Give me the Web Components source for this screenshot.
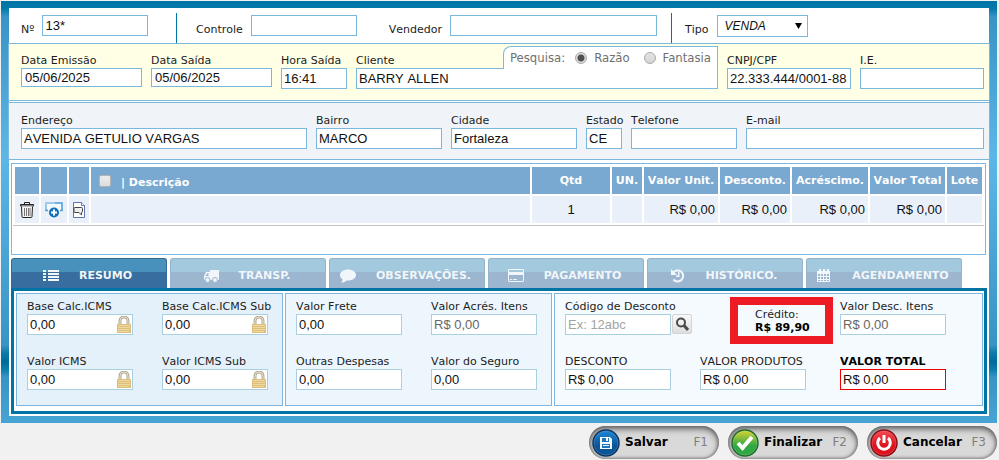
<!DOCTYPE html>
<html lang="pt-BR">
<head>
<meta charset="utf-8">
<title>Venda</title>
<style>
    body {
        margin: 0;
        padding: 1px 2px 0 1px;
        background: #f1f1f1;
        font: 11px/15px "DejaVu Sans", Verdana, sans-serif;
        font-kerning: none;
        color: #1c1c1c;
    }
</style>
</head>
<body>
<sale-frame>
    <header-band>
        <form-field slot="number" label="Nº" value="13*" inline></form-field>
        <form-field slot="people" label="Controle" inline style="--width: 106px"></form-field>
        <form-field slot="people" class="grow" label="Vendedor" inline></form-field>
        <select-field slot="type" label="Tipo" options="VENDA,ORÇAMENTO,DEVOLUÇÃO"></select-field>
    </header-band>
    <form-band class="client">
        <form-field label="Data Emissão" value="05/06/2025" short style="flex: 0 0 121px"></form-field>
        <form-field label="Data Saída" value="05/06/2025" short style="flex: 0 0 121px"></form-field>
        <form-field label="Hora Saída" value="16:41" style="flex: 0 0 66px"></form-field>
        <client-field style="flex: 1"></client-field>
        <form-field label="CNPJ/CPF" value="22.333.444/0001-88" style="flex: 0 0 124px"></form-field>
        <form-field label="I.E." style="flex: 0 0 124px"></form-field>
    </form-band>
    <form-band class="address">
        <form-field label="Endereço" value="AVENIDA GETULIO VARGAS" style="flex: 0 0 286px"></form-field>
        <form-field label="Bairro" value="MARCO" style="flex: 0 0 126px"></form-field>
        <form-field label="Cidade" value="Fortaleza" style="flex: 0 0 126px"></form-field>
        <form-field label="Estado" value="CE" style="flex: 0 0 36px"></form-field>
        <form-field label="Telefone" style="flex: 0 0 106px"></form-field>
        <form-field label="E-mail" style="flex: 1"></form-field>
    </form-band>
    <items-table></items-table>
    <tab-bar></tab-bar>
    <totals-panel>
        <totals-group style="--bg: #e4f1fa; --cols: 106px 106px">
            <form-field label="Base Calc.ICMS" value="0,00" soft locked></form-field>
            <form-field label="Base Calc.ICMS Sub" value="0,00" soft locked></form-field>
            <form-field label="Valor ICMS" value="0,00" soft locked></form-field>
            <form-field label="Valor ICMS Sub" value="0,00" soft locked></form-field>
        </totals-group>
        <totals-group style="--bg: #edf6fd; --cols: 106px 106px">
            <form-field label="Valor Frete" value="0,00" soft></form-field>
            <form-field label="Valor Acrés. Itens" value="R$ 0,00" soft muted></form-field>
            <form-field label="Outras Despesas" value="0,00" soft></form-field>
            <form-field label="Valor do Seguro" value="0,00" soft></form-field>
        </totals-group>
        <totals-group class="wide" style="--bg: #f4fafe; --cols: 106px 111px 106px">
            <form-field label="Código de Desconto" placeholder="Ex: 12abc" soft search></form-field>
            <credit-box value="R$ 89,90">Crédito:</credit-box>
            <form-field label="Valor Desc. Itens" value="R$ 0,00" soft muted></form-field>
            <form-field label="DESCONTO" value="R$ 0,00" soft></form-field>
            <form-field label="VALOR PRODUTOS" value="R$ 0,00" soft style="width: 106px"></form-field>
            <form-field label="VALOR TOTAL" value="R$ 0,00" total></form-field>
        </totals-group>
    </totals-panel>
</sale-frame>
<action-bar>
    <action-button shortcut="F1" icon="save">Salvar</action-button>
    <action-button shortcut="F2" icon="check">Finalizar</action-button>
    <action-button shortcut="F3" icon="power">Cancelar</action-button>
</action-bar>

<script>
const INPUT_CSS = `
    input, select {
        box-sizing: border-box;
        width: 100%;
        min-width: 0;
        height: 21px;
        margin: 0;
        padding: 0 2px;
        border: 1px solid #7ab8de;
        border-radius: 0;
        outline: 0;
        background: #fff;
        color: #111;
        font: 13px "Liberation Sans", Arial, sans-serif;
        font-kerning: none;
    }
    label { display: block; white-space: nowrap; }
`;

const LOCK = `<svg class="lock" width="14" height="17" viewBox="0 0 14 17">
    <path d="M3 8V5a4 4 0 0 1 8 0v3" fill="none" stroke="#b5aa91" stroke-width="3"/>
    <path d="M3 8V5a4 4 0 0 1 8 0v3" fill="none" stroke="#e6e0d0" stroke-width="1"/>
    <path d="M0 8h14v9H0z" fill="#dcbf7c"/>
    <path d="M1 9h12v1H1zM1 11h12v1H1zM1 13h12v1H1zM1 15h11v1H1z" fill="#f0d99c"/>
</svg>`;

class SaleFrame extends HTMLElement {
    constructor() {
        super();
        this.attachShadow({ mode: 'open' });
        this.shadowRoot.innerHTML = `
            <style>
                :host {
                    display: block;
                    padding: 7px 8px;
                    background: linear-gradient(#0075a5 0, #0078a9 7px, #3994c6 16px, #5cb6e6 155px,
                        #3993c4 344px, #0b7aaa 352px, #006b9b 361px, #0b7fae 369px, #3993c5 376px, #47a5d5 422px);
                }
                main { background: #fff; padding-bottom: 2px; }
            </style>
            <main><slot></slot></main>
        `;
    }
}

class HeaderBand extends HTMLElement {
    constructor() {
        super();
        this.attachShadow({ mode: 'open' });
        this.shadowRoot.innerHTML = `
            <style>
                :host { display: flex; padding-top: 5px; }
                div { box-sizing: border-box; display: flex; align-items: flex-start; height: 30px; padding: 2px 14px 0 13px; }
                .number { width: 168px; padding: 2px 28px 0 12px; border-right: 1px solid #0075a5; }
                .people { flex: 1; gap: 32px; padding-left: 19px; border-right: 1px solid #0075a5; }
                .type { width: 317px; }
                .number ::slotted(*), ::slotted(.grow) { flex: 1; }
            </style>
            <div class="number"><slot name="number"></slot></div>
            <div class="people"><slot name="people"></slot></div>
            <div class="type"><slot name="type"></slot></div>
        `;
    }
}

class FormBand extends HTMLElement {
    constructor() {
        super();
        this.attachShadow({ mode: 'open' });
        this.shadowRoot.innerHTML = `
            <style>
                :host {
                    display: flex;
                    gap: 9px;
                    margin: 0 -1px;
                    padding: 9px 5px 11px 12px;
                    border: 1px solid #7ab8de;
                    background: #ffffe6;
                }
                :host(.address) { margin-top: 1px; padding: 10px 5px 10px 12px; background: #f0f4f9; }
            </style>
            <slot></slot>
        `;
    }
}

class FormField extends HTMLElement {
    constructor() {
        super();
        this.attachShadow({ mode: 'open' });
        const value = this.getAttribute('value') || '';
        const placeholder = this.getAttribute('placeholder') || '';
        this.shadowRoot.innerHTML = `
            <style>
                ${INPUT_CSS}
                :host { display: block; min-width: 0; }
                .box { position: relative; display: flex; }
                :host([inline]) { display: flex; gap: 8px; }
                :host([inline]) label { padding-top: 7px; }
                :host([inline]) .box { flex: 1; min-width: var(--width, 0); }
                :host([inline]) input { flex: 1; width: 0; }
                :host([short]) input { height: 19px; padding: 0 3px; }
                :host([soft]) input { border-color: #a9d0e1; }
                :host([muted]) input { color: #666; }
                :host([total]) input { border-color: #f00000; }
                :host([total]) label { font-weight: bold; color: #000; }
                input::placeholder { color: #a3a3a3; }
                .lock { position: absolute; right: 2px; top: 2px; }
                button {
                    flex: none;
                    box-sizing: border-box;
                    width: 20px;
                    height: 20px;
                    margin: 0 -22px 0 1px;
                    padding: 2px;
                    border: 1px solid #d4d4d4;
                    border-radius: 2px;
                    background: linear-gradient(#fafafa, #dedede);
                }
                button svg { display: block; }
            </style>
            <label for="field">${this.getAttribute('label')}</label>
            <div class="box">
                <input id="field" type="text" value="${value}" placeholder="${placeholder}">
                ${this.hasAttribute('locked') ? LOCK : ''}
                ${this.hasAttribute('search') ? `
                <button type="button" aria-label="Buscar">
                    <svg width="14" height="14" viewBox="0 0 14 14" fill="none" stroke="#4a4a4a">
                        <circle cx="6" cy="5.5" r="4" stroke-width="2"/>
                        <path d="M9 8.5l4 4.5" stroke-width="3"/>
                    </svg>
                </button>` : ''}
            </div>
        `;
    }
}

class SelectField extends HTMLElement {
    constructor() {
        super();
        this.attachShadow({ mode: 'open' });
        const options = this.getAttribute('options').split(',');
        this.shadowRoot.innerHTML = `
            <style>
                ${INPUT_CSS}
                :host { display: flex; gap: 8px; }
                label { padding-top: 7px; }
                .box { position: relative; width: 91px; }
                select { appearance: none; height: 22px; padding-left: 7px; font-size: 12px; font-style: italic; }
                svg { position: absolute; right: 6px; top: 8px; pointer-events: none; }
            </style>
            <label for="field">${this.getAttribute('label')}</label>
            <div class="box">
                <select id="field">${options.map(o => `<option>${o}</option>`).join('')}</select>
                <svg width="7" height="6" viewBox="0 0 7 6"><path d="M0 0h7L3.500 6z"/></svg>
            </div>
        `;
    }
}

class ClientField extends HTMLElement {
    constructor() {
        super();
        this.attachShadow({ mode: 'open' });
        this.shadowRoot.innerHTML = `
            <style>
                ${INPUT_CSS}
                :host { display: block; position: relative; min-width: 0; }
                fieldset {
                    position: absolute;
                    right: 0;
                    bottom: 20px;
                    box-sizing: border-box;
                    display: flex;
                    align-items: center;
                    height: 23px;
                    margin: 0;
                    padding: 0 6px;
                    border: 1px solid #7ab8de;
                    border-bottom: 0;
                    border-top-left-radius: 8px;
                    background: #fff;
                    color: #707070;
                    font: 13px/20px "DejaVu Sans Condensed", Tahoma, sans-serif;
                }
                fieldset input {
                    appearance: none;
                    width: 12px;
                    height: 12px;
                    margin: 0 7px 0 10px;
                    padding: 0;
                    border: 1px solid #aaa;
                    border-radius: 50%;
                    background: linear-gradient(#e4e4e4, #d4d4d4);
                }
                fieldset input:checked { background: radial-gradient(circle, #505050 3px, #dcdcdc 4px); }
                fieldset label + input { margin-left: 14px; }
            </style>
            <label for="client">Cliente</label>
            <input id="client" type="text" value="BARRY ALLEN">
            <fieldset>
                <span>Pesquisa:</span>
                <input id="razao" type="radio" name="search" checked>
                <label for="razao">Razão</label>
                <input id="fantasia" type="radio" name="search">
                <label for="fantasia">Fantasia</label>
            </fieldset>
        `;
    }
}

class ItemsTable extends HTMLElement {
    constructor() {
        super();
        this.attachShadow({ mode: 'open' });
        const widths = [24, 26, 20, 0, 78, 30, 74, 70, 76, 75, 35];
        this.shadowRoot.innerHTML = `
            <style>
                :host {
                    display: block;
                    box-sizing: border-box;
                    min-height: 92px;
                    margin: 3px 3px 3px 2px;
                    padding: 1px;
                    border: 1px solid #7ab8e6;
                }
                table {
                    width: 100%;
                    table-layout: fixed;
                    border-spacing: 2px;
                    border-bottom: 1px solid #c4c4c4;
                }
                th, td { height: 27px; padding: 0; }
                th { background: #79a8d0; color: #fff; font-size: 11px; white-space: nowrap; }
                td { background: #e9f0f9; color: #111; font: 13px "Liberation Sans", Arial, sans-serif; text-align: center; }
                td.money { padding-right: 3px; text-align: right; }
                .description { padding-left: 8px; text-align: left; }
                .description div { display: flex; gap: 10px; align-items: flex-start; padding-top: 3px; }
                input {
                    appearance: none;
                    box-sizing: border-box;
                    width: 12px;
                    height: 12px;
                    margin: 0;
                    border: 1px solid #b4b4b4;
                    border-radius: 2px;
                    background: linear-gradient(#eee, #dcdcdc);
                }
                button { display: block; margin: auto; padding: 0; border: 0; background: none; }
                svg { display: block; }
            </style>
            <table>
                <colgroup>${widths.map(w => w ? `<col style="width: ${w}px">` : '<col>').join('')}</colgroup>
                <thead>
                    <tr>
                        <th></th><th></th><th></th>
                        <th class="description"><div><input id="all" type="checkbox"><label for="all">| Descrição</label></div></th>
                        <th>Qtd</th><th>UN.</th><th>Valor Unit.</th><th>Desconto.</th><th>Acréscimo.</th><th>Valor Total</th><th>Lote</th>
                    </tr>
                </thead>
                <tbody>
                    <tr>
                        <td><button type="button" aria-label="Excluir">
                            <svg width="14" height="16" viewBox="0 0 14 16" fill="none" stroke="#222">
                                <path d="M4.500 2V.5h5V2M.5 4V2.500h13V4z"/>
                                <path d="M1.500 4.500l.5 10q0 1 1 1h8q1 0 1-1l.5-10" fill="#f6f6f6"/>
                                <path d="M4.500 6v8M6.500 6v8M8.500 6v8M10 6v8" stroke="#777"/>
                            </svg>
                        </button></td>
                        <td><button type="button" aria-label="Adicionar">
                            <svg width="18" height="16" viewBox="0 0 18 16" fill="none">
                                <path d="M3 8.500H1V1h16v7.500h-2" fill="#f4f9fd" stroke="#4b9bd5" stroke-width="1.500"/>
                                <path d="M1 7V1h9" stroke="#a8d3f2" stroke-width="1.500"/>
                                <circle cx="9" cy="10.500" r="5" fill="#1170b8"/>
                                <path d="M9 7.500v6M6 10.500h6" stroke="#fff" stroke-width="2"/>
                            </svg>
                        </button></td>
                        <td><button type="button" aria-label="Observação">
                            <svg width="12" height="16" viewBox="0 0 12 16" fill="#fff">
                                <path d="M.5.5h8l3 3v12H.5z" stroke="#5f74b0"/>
                                <path d="M8.500.5v3h3" stroke="#5f74b0"/>
                                <path d="M2 5.500h6.500q1 0 1 1v3q0 1-1 1V13L6 10.500H2q-1 0-1-1v-3q0-1 1-1z" fill="#efefe9" stroke="#444"/>
                            </svg>
                        </button></td>
                        <td></td>
                        <td>1</td>
                        <td></td>
                        <td class="money">R$ 0,00</td>
                        <td class="money">R$ 0,00</td>
                        <td class="money">R$ 0,00</td>
                        <td class="money">R$ 0,00</td>
                        <td></td>
                    </tr>
                </tbody>
            </table>
        `;
    }
}

const TABS = [
    ['RESUMO', '<path d="M0 2h3v2H0zM5 2h11v2H5zM0 5h3v2H0zM5 5h11v2H5zM0 8h3v2H0zM5 8h11v2H5zM0 11h3v2H0zM5 11h11v2H5z"/>'],
    ['TRANSP.', '<path fill-rule="evenodd" d="M7 2h9v10H1V8l2-4h4zM5.500 5.500H4L2.500 8h3z"/><circle cx="4.500" cy="12" r="2.500" stroke="#9cb5cf"/><circle cx="12" cy="12" r="2.500" stroke="#9cb5cf"/>'],
    ['OBSERVAÇÕES.', '<path d="M8 1.500c4.500 0 8 2.400 8 5.500s-3.500 5.500-8 5.500l-1.500-.1C5 14 3 14.500 1 14.500c1-1 1.700-2 1.600-3.200C1 10.300 0 8.800 0 7c0-3.100 3.500-5.500 8-5.500z"/>'],
    ['PAGAMENTO', '<path fill-rule="evenodd" d="M1 1h14l1 1v11l-1 1H1l-1-1V2zM1 2v2h14V2zM1 7v6h14V7z"/><path d="M2 11h2v1H2zM5 11h4v1H5z"/>'],
    ['HISTÓRICO.', '<path d="M3 5a5.500 5.500 0 1 1 .5 6.500" fill="none" stroke="#f0f6fa" stroke-width="2"/><path d="M1 1v6h6z"/><path d="M8 4h1.500v5H6V7.500h2z"/>'],
    ['AGENDAMENTO', '<path fill-rule="evenodd" d="M1 3h2V1h2v2h2V1h2v2h2V1h2v2h1v11H1zM2 6v2h2V6zm3 0v2h2V6zm3 0v2h2V6zm3 0v2h2V6zM2 9v2h2V9zm3 0v2h2V9zm3 0v2h2V9zm3 0v2h2V9zM2 12v1h2v-1zm3 0v1h2v-1zm3 0v1h2v-1zm3 0v1h2v-1z"/>']
];

class TabBar extends HTMLElement {
    constructor() {
        super();
        this.attachShadow({ mode: 'open' });
        this.shadowRoot.innerHTML = `
            <style>
                :host { display: flex; gap: 3px; padding: 0 27px 0 2px; }
                button {
                    flex: 1 1 0;
                    display: flex;
                    align-items: center;
                    justify-content: center;
                    gap: 20px;
                    height: 30px;
                    min-width: 0;
                    padding: 4px 3px 0 0;
                    border: 1px solid #95b3ca;
                    border-bottom: 0;
                    border-radius: 3px 3px 0 0;
                    background: linear-gradient(#a3c9df 13px, #9db6d0 13px);
                    color: #f0f6fa;
                    font: bold 11px/15px "DejaVu Sans", Verdana, sans-serif;
                }
                button.active {
                    border-color: #356b98;
                    background: linear-gradient(#4991bd 13px, #386e9f 13px);
                }
                svg { flex: none; fill: #f0f6fa; }
            </style>
            ${TABS.map(([name, icon], i) => `
                <button type="button"${i === 0 ? ' class="active"' : ''}>
                    <svg width="16" height="16" viewBox="0 0 16 16">${icon}</svg><span>${name}</span>
                </button>`).join('')}
        `;
    }
}

class TotalsPanel extends HTMLElement {
    constructor() {
        super();
        this.attachShadow({ mode: 'open' });
        this.shadowRoot.innerHTML = `
            <style>
                :host {
                    display: flex;
                    gap: 2px;
                    margin: 0 2px;
                    padding: 2px 1px 5px 2px;
                    border: 3px solid #0075a5;
                    background: #fff;
                }
                ::slotted(*) { flex: 0 0 267px; }
                ::slotted(.wide) { flex: 1; }
            </style>
            <slot></slot>
        `;
    }
}

class TotalsGroup extends HTMLElement {
    constructor() {
        super();
        this.attachShadow({ mode: 'open' });
        this.shadowRoot.innerHTML = `
            <style>
                :host {
                    box-sizing: border-box;
                    display: grid;
                    grid-template-columns: var(--cols);
                    gap: 19px 29px;
                    padding: 5px 10px 15px;
                    border: 1px solid #7db5e3;
                    background: var(--bg);
                }
            </style>
            <slot></slot>
        `;
    }
}

class CreditBox extends HTMLElement {
    constructor() {
        super();
        this.attachShadow({ mode: 'open' });
        this.shadowRoot.innerHTML = `
            <style>
                :host { display: block; position: relative; }
                div {
                    position: absolute;
                    left: 30px;
                    top: -2px;
                    box-sizing: border-box;
                    width: 103px;
                    height: 47px;
                    padding: 3px 0 0 17px;
                    border: 8px solid #ed1c24;
                    line-height: 13px;
                    white-space: nowrap;
                }
                b { display: block; color: #000; }
            </style>
            <div><slot></slot><b>${this.getAttribute('value')}</b></div>
        `;
    }
}

class ActionBar extends HTMLElement {
    constructor() {
        super();
        this.attachShadow({ mode: 'open' });
        this.shadowRoot.innerHTML = `
            <style>
                :host { display: flex; justify-content: flex-end; gap: 9px; padding-top: 3px; }
            </style>
            <slot></slot>
        `;
    }
}

const ACTION_ICONS = {
    save: ['#1b80cf', '#0b5596', '#0c3560', `
        <path d="M8 8h10l2 2v10H8z" fill="#f4f8fc"/>
        <path d="M10 9h7v4h-7zM10 15h8v4h-8z" fill="#1b74bd"/>
        <path d="M14 9h2v3h-2zM11 16h6v1h-6z" fill="#f4f8fc"/>`],
    check: ['#c3cc35', '#31a744', '#1d6b2b', `
        <path d="M7 14l4.500 5L21 8" fill="none" stroke="#fff" stroke-width="4"/>`],
    power: ['#f0444b', '#dd1420', '#8a0d14', `
        <path d="M10 9a6.300 6.300 0 1 0 8 0" fill="none" stroke="#fff" stroke-width="3"/>
        <path d="M14 6v8" stroke="#fff" stroke-width="3"/>`]
};

class ActionButton extends HTMLElement {
    constructor() {
        super();
        this.attachShadow({ mode: 'open' });
        const [light, dark, rim, glyph] = ACTION_ICONS[this.getAttribute('icon')];
        this.shadowRoot.innerHTML = `
            <style>
                :host { display: block; width: 130px; }
                button {
                    display: flex;
                    align-items: center;
                    gap: 5px;
                    width: 100%;
                    height: 33px;
                    padding: 0 11px 0 3px;
                    border: 0;
                    border-radius: 17px;
                    background: #d9d9d9;
                    box-shadow: inset 0 3px 6px #666, inset 0 0 3px 1px #888;
                    color: #000;
                    font: bold 12px/15px "DejaVu Sans", Verdana, sans-serif;
                }
                svg { flex: none; }
                kbd { margin-left: auto; color: #808080; font: 12px/15px "DejaVu Sans", Verdana, sans-serif; }
            </style>
            <button type="button">
                <svg width="28" height="28" viewBox="0 0 28 28">
                    <defs>
                        <linearGradient id="fill" x2="0" y2="1">
                            <stop offset=".1" stop-color="${light}"/>
                            <stop offset=".6" stop-color="${dark}"/>
                        </linearGradient>
                    </defs>
                    <circle cx="14" cy="14" r="13" fill="url(#fill)" stroke="${rim}" stroke-width="1.500"/>
                    <circle cx="14" cy="14" r="12" fill="none" stroke="#fff" stroke-opacity=".15"/>
                    ${glyph}
                </svg>
                <span><slot></slot></span>
                <kbd>${this.getAttribute('shortcut')}</kbd>
            </button>
        `;
    }
}

customElements.define('sale-frame', SaleFrame);
customElements.define('header-band', HeaderBand);
customElements.define('form-band', FormBand);
customElements.define('form-field', FormField);
customElements.define('select-field', SelectField);
customElements.define('client-field', ClientField);
customElements.define('items-table', ItemsTable);
customElements.define('tab-bar', TabBar);
customElements.define('totals-panel', TotalsPanel);
customElements.define('totals-group', TotalsGroup);
customElements.define('credit-box', CreditBox);
customElements.define('action-bar', ActionBar);
customElements.define('action-button', ActionButton);
</script>
</body>
</html>
